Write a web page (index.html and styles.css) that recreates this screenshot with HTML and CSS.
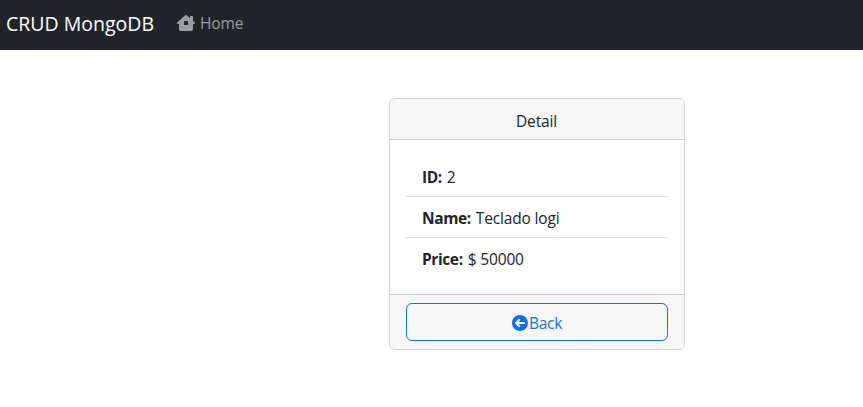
FILE: index.html
```
<!DOCTYPE html>
<html lang="en">
<head>
<meta charset="utf-8">
<title>CRUD MongoDB</title>
<link rel="stylesheet" href="styles.css">
</head>
<body>
<nav class="navbar">
  <a class="brand">CRUD MongoDB</a>
  <a class="nav-link"><svg class="icon-home" viewBox="0 0 576 512"><path fill="currentColor" d="M575.8 255.5c0 18-15 32.1-32 32.1l-32 0 .7 160.2c.2 35.5-28.5 64.3-64 64.3l-320.4 0c-35.3 0-64-28.7-64-64l0-160.4-32 0c-18 0-32-14-32-32.1c0-9 3-17 10-24L266.4 8c7-7 15-8 22-8s15 2 21 7L416 100.7V64c0-17.7 14.3-32 32-32h32c17.7 0 32 14.3 32 32v121l52.8 46.4c8 7 12 15 11 24zM248 192c-13.3 0-24 10.7-24 24v80c0 13.3 10.7 24 24 24h80c13.3 0 24-10.7 24-24v-80c0-13.3-10.7-24-24-24h-80z"/></svg><span>Home</span></a>
</nav>
<main class="card">
  <header class="card-header">Detail</header>
  <div class="card-body">
    <ul class="list">
      <li><b>ID:</b><span>2</span></li>
      <li><b>Name:</b><span>Teclado logi</span></li>
      <li><b>Price:</b><span>$ 50000</span></li>
    </ul>
  </div>
  <footer class="card-footer">
    <a class="btn"><svg class="icon-back" viewBox="0 0 512 512"><path fill="currentColor" fill-rule="evenodd" d="M256 0C114.6 0 0 114.6 0 256s114.6 256 256 256 256-114.6 256-256S397.4 0 256 0zM384 288H205.3l49.4 49.4c12.5 12.5 12.5 32.7 0 45.2s-32.8 12.5-45.3 0l-104-104C97.4 270.6 96 260.9 96 256s1.4-14.6 9.4-22.6l104-104c12.5-12.5 32.8-12.5 45.3 0s12.5 32.7 0 45.2L205.3 224H384c17.7 0 32 14.3 32 32s-14.3 32-32 32z"/></svg><span class="btn-label">Back</span></a>
  </footer>
</main>
</body>
</html>
```
FILE: styles.css
```
* { box-sizing: border-box; }
body {
  margin: 0;
  background: #fff;
  color: #212529;
  font: 15.5px/24px "Segoe UI", "Open Sans", "Noto Sans", sans-serif;
  letter-spacing: -0.15px;
}
.navbar {
  display: flex;
  align-items: center;
  height: 50px;
  padding: 0 6px 2px;
  background: #212529;
}
.brand {
  width: 171px;
  color: #fff;
  font-size: 19.5px;
  line-height: 30px;
  letter-spacing: 0;
  white-space: nowrap;
}
.nav-link { display: flex; align-items: center; padding-bottom: 2px; color: #9b9d9e; }
.icon-home { width: 18px; height: 16px; margin-right: 5px; }
.card {
  width: 296px;
  margin: 48px 0 0 389px;
  border: 1px solid #cfcfcf;
  border-radius: 6px;
  overflow: hidden;
}
.card-header {
  height: 41px;
  padding: 10px 1px 0 0;
  text-align: center;
  background: #f8f8f8;
  border-bottom: 1px solid #cbcbcb;
}
.card-body { padding: 16px; }
.list { margin: 0; padding: 0; list-style: none; }
.list li {
  display: flex;
  gap: 5px;
  height: 41px;
  padding: 9px 16px 7px;
  border-bottom: 1px solid #dee2e6;
}
.list li:last-child { height: 40px; border-bottom: 0; }
.list b { font-weight: 700; letter-spacing: -0.4px; }
.card-footer { padding: 8px 16px; background: #f8f8f8; border-top: 1px solid #cbcbcb; }
.btn {
  display: flex;
  align-items: center;
  justify-content: center;
  height: 38px;
  color: #0d6efd;
  border: 1px solid #0d6efd;
  border-radius: 6px;
}
.icon-back { width: 16px; height: 16px; margin: 1px 1px 0 0; }
.btn-label { padding-top: 2px; letter-spacing: -0.3px; }
```
